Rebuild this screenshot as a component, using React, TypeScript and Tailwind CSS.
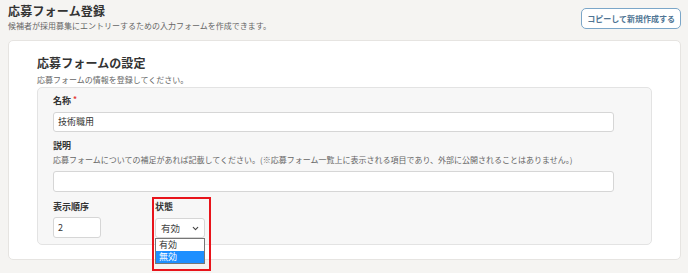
import { ChevronDown } from 'lucide-react';

const font = { fontFamily: '"Noto Sans CJK JP", "Noto Sans", sans-serif' };

export default function App() {
    return (
        <div className="min-h-screen w-[688px] bg-[#f5f4f2] pl-2 pr-[7px] text-[#333]" style={font}>

            {/* Page header */}
            <div className="flex h-[40px] items-start justify-between">
                <div className="pt-[3px]">
                    <h1 className="text-[12px] font-bold leading-[16px] tracking-[0.2px]">応募フォーム登録</h1>
                    <p className="text-[8px] leading-[14px] text-[#666]">
                        候補者が採用募集にエントリーするための入力フォームを作成できます。
                    </p>
                </div>
                <button className="mt-[8px] flex h-[21px] items-center rounded-[5px] border border-[#7ba6c8] bg-white px-[5px] text-[8px] font-bold text-[#4f7594]">
                    コピーして新規作成する
                </button>
            </div>

            {/* Card */}
            <div className="rounded-[5px] border border-[#e6e4e1] bg-white px-[28px] pb-[14px] pt-[14px]">
                <h2 className="text-[12px] font-bold leading-[16px] tracking-[0.1px]">応募フォームの設定</h2>
                <p className="mt-[3px] text-[8px] leading-[12px] text-[#666]">応募フォームの情報を登録してください。</p>

                <div className="mt-[1px] rounded-[5px] border border-[#e3e3e3] bg-[#f7f7f7] pb-[6px] pl-[15px] pr-[37px] pt-[6px]">
                    <div className="flex items-start text-[9px] font-bold leading-[14px]">
                        名称<span className="ml-[2px] text-[8px] leading-[10px] text-[#e53935]">*</span>
                    </div>
                    <div className="mt-[4px] flex h-[20px] items-center rounded-[3px] border border-[#d6d6d6] bg-white px-[4px] text-[9px]">
                        技術職用
                    </div>

                    <div className="mt-[7px] text-[9px] font-bold leading-[14px]">説明</div>
                    <p className="mt-[1px] whitespace-nowrap text-[8px] leading-[12px] text-[#666]">
                        応募フォームについての補足があれば記載してください。(※応募フォーム一覧上に表示される項目であり、外部に公開されることはありません。)
                    </p>
                    <div className="mt-[5px] h-[21px] rounded-[3px] border border-[#d6d6d6] bg-white" />

                    <div className="mt-[8px] flex gap-[54px]">
                        <div>
                            <div className="text-[9px] font-bold leading-[14px]">表示順序</div>
                            <div className="mt-[3px] flex h-[21px] w-[48px] items-center rounded-[3px] border border-[#d6d6d6] bg-white px-[4px] text-[9px]">
                                2
                            </div>
                        </div>

                        <div className="relative">
                            <div className="text-[9px] font-bold leading-[14px]">状態</div>
                            <div className="mt-[4px] flex h-[20px] w-[50px] items-center justify-between rounded-[3px] border border-[#d6d6d6] bg-white pl-[5px] pr-[4px] text-[9.5px] text-[#444]">
                                有効
                                <ChevronDown size={9} strokeWidth={3} className="text-[#444]" />
                            </div>

                            {/* Open select list */}
                            <div className="absolute left-0 top-[38px] z-10 w-[50px] border border-[#767676] bg-white text-[9px]">
                                <div className="flex h-[12px] items-center pl-[3px] text-[#333]">有効</div>
                                <div className="flex h-[12px] items-center bg-[#1e8fff] pl-[3px] text-white">無効</div>
                            </div>

                            {/* Highlight frame */}
                            <div className="pointer-events-none absolute left-[-3px] top-[-3px] z-20 h-[74px] w-[59px] border-2 border-[#e8141b]" />
                        </div>
                    </div>
                </div>
            </div>
        </div>
    );
}
